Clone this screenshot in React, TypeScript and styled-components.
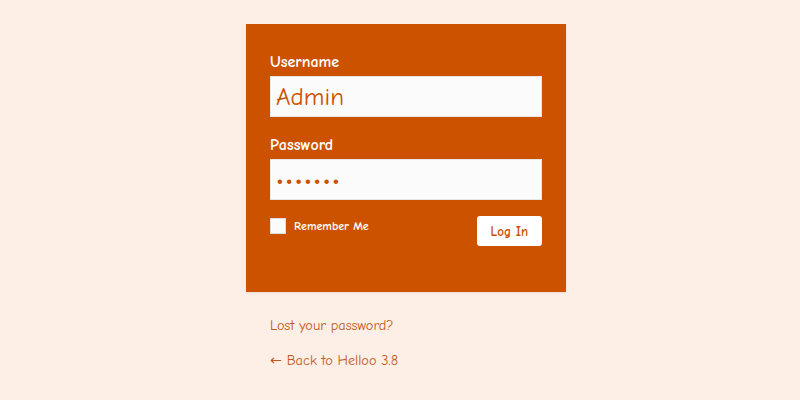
import React from 'react';
import styled, { createGlobalStyle } from 'styled-components';

const GlobalStyle = createGlobalStyle`
  html, body {
    margin: 0;
    padding: 0;
    background: #fdefe5;
  }
  body {
    font-family: "Comic Sans MS", "Comic Neue", "DejaVu Sans", sans-serif;
  }
`;

const Page = styled.div`
  display: flex;
  justify-content: center;
  padding: 24px 0 0 12px;
  min-height: 376px;
`;

const Login = styled.div`
  width: 320px;
`;

const Form = styled.form`
  background: #cc5200;
  padding: 28px 24px 46px;
  box-shadow: 0 1px 2px rgba(0, 0, 0, 0.08);
`;

const Field = styled.div<{ $gap?: number }>`
  display: flex;
  flex-direction: column;
  gap: 4px;
  margin-bottom: ${p => p.$gap ?? 0}px;
`;

const Label = styled.label`
  color: #fff;
  font-size: 16px;
  font-weight: bold;
  line-height: 20px;
`;

const Input = styled.input<{ $spaced?: boolean }>`
  box-sizing: border-box;
  width: 100%;
  height: 41px;
  margin: 0;
  padding: 3px 5px;
  border: 1px solid #e6e6e6;
  background: #fbfbfb;
  color: #cc5200;
  font-family: inherit;
  font-size: 25px;
  letter-spacing: ${p => (p.$spaced ? '1.5px' : 'normal')};
  outline: none;
`;

const Actions = styled.div`
  display: flex;
  justify-content: space-between;
  align-items: flex-start;
  margin-top: 16px;
`;

const Remember = styled.label`
  display: flex;
  align-items: center;
  gap: 8px;
  margin-top: 2px;
  color: #fff;
  font-size: 12px;
  font-weight: bold;
`;

const Box = styled.span`
  width: 16px;
  height: 16px;
  box-sizing: border-box;
  background: #fbfbfb;
  border: 1px solid #ddd;
`;

const Button = styled.button`
  height: 30px;
  padding: 0 14px;
  border: none;
  border-radius: 3px;
  background: #fff;
  color: #cc5200;
  font-family: inherit;
  font-size: 13px;
  font-weight: bold;
  cursor: pointer;
`;

const Nav = styled.p<{ $top: number }>`
  margin: ${p => p.$top}px 0 0;
  padding: 0 24px;
  font-size: 14.3px;
  line-height: 20px;
`;

const Link = styled.a`
  color: #c2581c;
  text-decoration: none;
`;

export default function App() {
  return (
    <>
      <GlobalStyle />
      <Page>
        <Login>
          <Form onSubmit={e => e.preventDefault()}>
            <Field $gap={18}>
              <Label>Username</Label>
              <Input defaultValue="Admin" />
            </Field>
            <Field>
              <Label>Password</Label>
              <Input type="password" defaultValue="1234567" $spaced />
            </Field>
            <Actions>
              <Remember>
                <Box />
                Remember Me
              </Remember>
              <Button type="submit">Log In</Button>
            </Actions>
          </Form>
          <Nav $top={24}>
            <Link href="#">Lost your password?</Link>
          </Nav>
          <Nav $top={15}>
            <Link href="#">← Back to Helloo 3.8</Link>
          </Nav>
        </Login>
      </Page>
    </>
  );
}
